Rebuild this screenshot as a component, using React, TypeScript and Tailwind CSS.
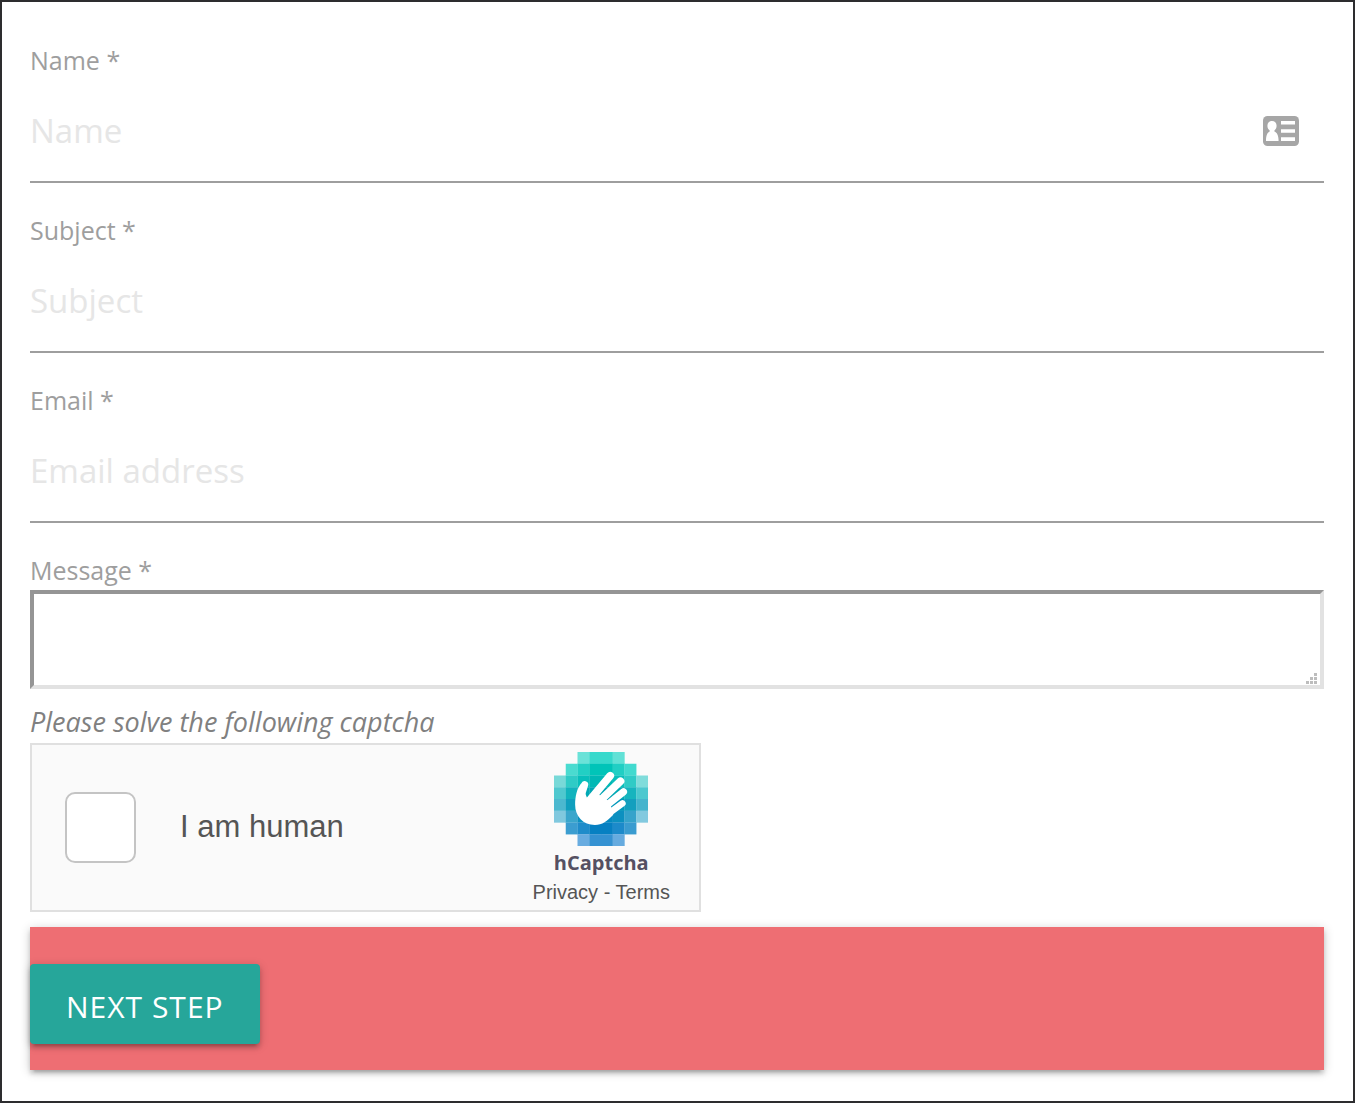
import { useState } from 'react'
import type { ReactNode } from 'react'

type FieldProps = {
  id: string
  label: string
  placeholder: string
  type?: string
  value: string
  onChange: (value: string) => void
  icon?: ReactNode
}

function ContactCardIcon() {
  return (
    <svg viewBox="0 0 36 30" className="h-[30px] w-9" aria-hidden="true">
      <rect width="36" height="30" rx="4.5" fill="#a6a6a6" />
      <path
        d="M9 5c2.700 0 4.600 2 4.600 4.800 0 2-.8 3.700-2.200 4.700v1c2.800 1 4.200 4.200 4.200 9.500H3c0-5.300 1.200-8.500 3.700-9.500v-1C5.200 13.500 4.400 11.800 4.400 9.800 4.400 7 6.300 5 9 5z"
        fill="#fff"
      />
      <path d="M18 5h14v3.500H18zM18 13.200h14v3.500H18zM18 21.300h14v3.700H18z" fill="#fff" />
    </svg>
  )
}

// [first column, colours from left to right]
const LOGO_ROWS: [number, string[]][] = [
  [2, ['#6ae2d8', '#37d9cc', '#37d9cc', '#62e1d6']],
  [1, ['#4adbd0', '#22cfc4', '#00c4b8', '#00c4b8', '#20cfc4', '#42dacf']],
  [0, ['#78d9d8', '#2fcbc6', '#08bfbb', '#00b8b5', '#00b8b5', '#08bfbb', '#2fcbc6', '#80dcdb']],
  [0, ['#4fc8cf', '#12b3bd', '#00a9b5', '#00a5b3', '#00a5b3', '#00a9b5', '#16b4be', '#4cc8cf']],
  [0, ['#4bb8cf', '#109fbe', '#0097ba', '#0097ba', '#0097ba', '#0097ba', '#149fbe', '#45b4cd']],
  [0, ['#80c8de', '#3aa6cc', '#0c90c0', '#058ac0', '#058ac0', '#0c90c0', '#36a3cb', '#82c9df']],
  [1, ['#3b9dd0', '#1f8cca', '#0680c2', '#0680c2', '#1c8aca', '#3a9cd0']],
  [2, ['#68ace0', '#3592d2', '#3592d2', '#66abdf']],
]

function CaptchaLogo() {
  return (
    <svg viewBox="0 0 276 276" className="size-[94px]" aria-hidden="true">
      {LOGO_ROWS.map(([start, colors], row) =>
        colors.map((color, i) => (
          <rect
            key={`${row}-${i}`}
            x={(start + i) * 34.5}
            y={row * 34.5}
            width="35"
            height="35"
            fill={color}
          />
        )),
      )}
      <g stroke="#fff" strokeLinecap="round" fill="none">
        <path d="M90 96 76 140" strokeWidth="21" />
        <path d="M165 70 106 140" strokeWidth="23" />
        <path d="M195 86 124 154" strokeWidth="23" />
        <path d="M204 117 140 168" strokeWidth="21" />
        <path d="M201 151 150 188" strokeWidth="19" />
      </g>
      <path
        d="M80 92C67 108 62 132 62 154c0 36 24 60 58 60 22 0 36-11 54-30l-10-38-35-23-19 8-12 6z"
        fill="#fff"
      />
    </svg>
  )
}

function Field({ id, label, placeholder, type = 'text', value, onChange, icon }: FieldProps) {
  return (
    <div className="mb-[27px]">
      <label htmlFor={id} className="block text-[25px] leading-10 text-[#9e9e9e]">
        {label}
      </label>
      <div className="flex h-[103px] items-center border-b-2 border-[#9e9e9e] pr-[25px]">
        <input
          id={id}
          name={id}
          type={type}
          value={value}
          onChange={(e) => onChange(e.target.value)}
          placeholder={placeholder}
          className="h-full min-w-0 flex-1 bg-transparent text-[33px] text-gray-800 outline-none placeholder:text-[#e6e6e6]"
        />
        {icon}
      </div>
    </div>
  )
}

export default function App() {
  const [form, setForm] = useState({ name: '', subject: '', email: '', message: '' })
  const [human, setHuman] = useState(false)

  const update = (key: keyof typeof form) => (value: string) =>
    setForm({ ...form, [key]: value })

  return (
    <main className="min-h-screen border-2 border-[#2d2d2f] bg-white pt-[38px] pr-[29px] pb-[31px] pl-7 font-['Open_Sans','Noto_Sans',sans-serif]">
      <form onSubmit={(e) => e.preventDefault()}>
        <Field
          id="name"
          label="Name *"
          placeholder="Name"
          value={form.name}
          onChange={update('name')}
          icon={<ContactCardIcon />}
        />
        <Field
          id="subject"
          label="Subject *"
          placeholder="Subject"
          value={form.subject}
          onChange={update('subject')}
        />
        <Field
          id="email"
          label="Email *"
          placeholder="Email address"
          type="email"
          value={form.email}
          onChange={update('email')}
        />

        <label htmlFor="message" className="block text-[25px] leading-10 text-[#9e9e9e]">
          Message *
        </label>
        <div className="relative">
          <textarea
            id="message"
            name="message"
            value={form.message}
            onChange={(e) => update('message')(e.target.value)}
            className="block h-[99px] w-full resize-none border-4 border-t-[#959595] border-r-[#e2e2e2] border-b-[#e2e2e2] border-l-[#959595] px-2 text-[25px] outline-none"
          />
          <svg
            viewBox="0 0 11 11"
            className="pointer-events-none absolute right-[7px] bottom-[5px] size-[11px]"
            fill="#bdbdbd"
            aria-hidden="true"
          >
            <path d="M8 0h3v3H8zM4 4h3v3H4zM8 4h3v3H8zM0 8h3v3H0zM4 8h3v3H4zM8 8h3v3H8z" />
          </svg>
        </div>

        <p className="mt-[13px] text-[27px] leading-10 text-[#808080] italic">
          Please solve the following captcha
        </p>

        <div className="mt-px flex h-[169px] w-full max-w-[671px] items-center justify-between border-2 border-[#e0e0e0] bg-[#fafafa] pr-[29px] pl-[33px] font-['Liberation_Sans',Arial,sans-serif] text-[#555]">
          <div className="flex items-center gap-11">
            <input
              id="human"
              type="checkbox"
              checked={human}
              onChange={(e) => setHuman(e.target.checked)}
              className="size-[71px] appearance-none rounded-[10px] border-2 border-[#c4c4c4] bg-white checked:bg-[#00a5b3]"
            />
            <label htmlFor="human" className="text-[31px]">
              I am human
            </label>
          </div>
          <div className="flex flex-col items-center">
            <CaptchaLogo />
            <span className="font-['Open_Sans',sans-serif] text-[20px] leading-[34px] font-bold text-[#555062]">
              hCaptcha
            </span>
            <div className="text-[20px] leading-6">
              <a href="#privacy">Privacy</a> - <a href="#terms">Terms</a>
            </div>
          </div>
        </div>

        <div className="mt-[15px] bg-[#ee6e73] pt-[37px] pb-[26px] shadow-[0_4px_4px_rgba(0,0,0,0.14),0_6px_2px_-4px_rgba(0,0,0,0.12),0_2px_10px_rgba(0,0,0,0.2)]">
          <button
            type="submit"
            className="block h-20 rounded-[4px] bg-[#26a69a] px-9 pt-1 text-[30px] tracking-[1px] text-white uppercase shadow-[0_4px_4px_rgba(0,0,0,0.14),0_6px_2px_-4px_rgba(0,0,0,0.12),0_2px_10px_rgba(0,0,0,0.2)]"
          >
            Next step
          </button>
        </div>
      </form>
    </main>
  )
}
